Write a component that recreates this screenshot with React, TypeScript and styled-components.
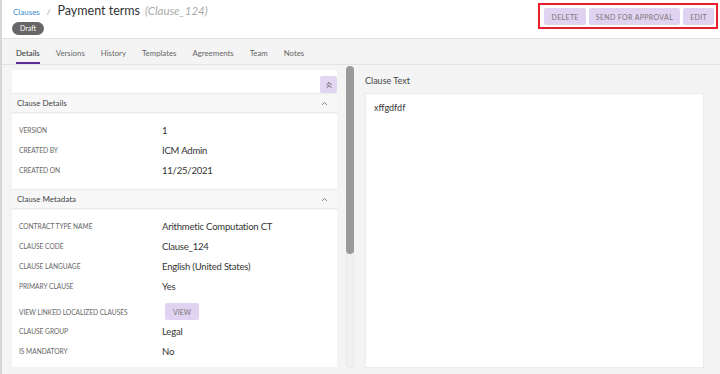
import React from 'react';
import styled, { createGlobalStyle } from 'styled-components';
import { ChevronUp, ChevronsUp } from 'lucide-react';

const GlobalStyle = createGlobalStyle`
  html, body {
    margin: 0;
    padding: 0;
    background: #f4f4f4;
  }
  * {
    box-sizing: border-box;
  }
`;

type Field = {
  label: string;
  value?: string;
  button?: string;
};

const detailFields: Field[] = [
  { label: 'Version', value: '1' },
  { label: 'Created by', value: 'ICM Admin' },
  { label: 'Created on', value: '11/25/2021' },
];

const metadataFields: Field[] = [
  { label: 'Contract type name', value: 'Arithmetic Computation CT' },
  { label: 'Clause code', value: 'Clause_124' },
  { label: 'Clause language', value: 'English (United States)' },
  { label: 'Primary clause', value: 'Yes' },
  { label: 'View linked localized clauses', button: 'View' },
  { label: 'Clause group', value: 'Legal' },
  { label: 'Is mandatory', value: 'No' },
  { label: 'Is editable', value: 'No' },
];

const tabs = ['Details', 'Versions', 'History', 'Templates', 'Agreements', 'Team', 'Notes'];

const App: React.FC = () => {
  function renderFields(fields: Field[]) {
    return fields.map((field) => (
      <Row key={field.label} $tall={!!field.button}>
        <Label>{field.label}</Label>
        {field.button ? <SmallButton>{field.button}</SmallButton> : <Value>{field.value}</Value>}
      </Row>
    ));
  }

  return (
    <Page>
      <GlobalStyle />

      {/* Header */}
      <Header>
        <TitleBlock>
          <Crumbs>
            <CrumbLink>Clauses</CrumbLink>
            <Slash>/</Slash>
            <Title>Payment terms</Title>
            <Code>(Clause_124)</Code>
          </Crumbs>
          <Badge>Draft</Badge>
        </TitleBlock>
        <Actions>
          <ActionButton>Delete</ActionButton>
          <ActionButton>Send for approval</ActionButton>
          <ActionButton>Edit</ActionButton>
        </Actions>
      </Header>

      {/* Tabs */}
      <Tabs>
        {tabs.map((tab, index) => (
          <Tab key={tab} $active={index === 0}>
            {tab}
          </Tab>
        ))}
      </Tabs>

      {/* Content */}
      <Content>
        <Card>
          <CardToolbar>
            <CollapseButton>
              <ChevronsUp size={10} strokeWidth={2.2} />
            </CollapseButton>
          </CardToolbar>

          <SectionHeader>
            Clause Details
            <ChevronUp size={9} strokeWidth={2.2} />
          </SectionHeader>
          <Fields>{renderFields(detailFields)}</Fields>

          <SectionHeader>
            Clause Metadata
            <ChevronUp size={9} strokeWidth={2.2} />
          </SectionHeader>
          <Fields>{renderFields(metadataFields)}</Fields>
        </Card>

        <Scrollbar>
          <Thumb />
        </Scrollbar>

        <TextPanel>
          <PanelTitle>Clause Text</PanelTitle>
          <TextBox>xffgdfdf</TextBox>
        </TextPanel>
      </Content>
    </Page>
  );
};

export default App;

const Page = styled.div`
  width: 720px;
  height: 374px;
  overflow: hidden;
  display: flex;
  flex-direction: column;
  background: #f4f4f4;
  border-left: 2px solid #d6d6d6;
  font-family: Lato, 'Noto Sans', sans-serif;
  color: #333;
`;

const Header = styled.div`
  height: 39px;
  flex-shrink: 0;
  background: #fff;
  border-bottom: 1px solid #e2e2e2;
  display: flex;
  justify-content: space-between;
  align-items: flex-start;
  padding: 0 2px 0 10px;
`;

const TitleBlock = styled.div`
  display: flex;
  flex-direction: column;
  align-items: flex-start;
  padding-top: 3px;
`;

const Crumbs = styled.div`
  display: flex;
  align-items: baseline;
  height: 16px;
`;

const CrumbLink = styled.span`
  font-size: 8px;
  color: #3a8bd0;
  margin-left: 1px;
`;

const Slash = styled.span`
  font-size: 8px;
  color: #999;
  margin: 0 7px 0 7px;
`;

const Title = styled.span`
  font-size: 12.5px;
  color: #333;
`;

const Code = styled.span`
  font-size: 11.5px;
  font-style: italic;
  color: #aaa;
  margin-left: 5px;
`;

const Badge = styled.span`
  margin-top: 3px;
  height: 13px;
  padding: 0 8px;
  border-radius: 7px;
  background: #666;
  color: #fff;
  font-size: 7px;
  line-height: 13px;
`;

const Actions = styled.div`
  margin-top: 3px;
  display: flex;
  gap: 3px;
  padding: 3px 2px 2px 4px;
  border: 2px solid #e3202c;
`;

const ActionButton = styled.button`
  height: 17px;
  padding: 0 7px;
  border: none;
  border-radius: 2px;
  background: #e0d3f1;
  color: #777;
  font-family: inherit;
  font-size: 7px;
  letter-spacing: 0.35px;
  text-transform: uppercase;
`;

const Tabs = styled.div`
  height: 26px;
  flex-shrink: 0;
  display: flex;
  padding-left: 14px;
  border-bottom: 1px solid #e3e3e3;
`;

const Tab = styled.div<{ $active?: boolean }>`
  margin-right: 16px;
  display: flex;
  align-items: center;
  font-size: 7.8px;
  color: ${({ $active }) => ($active ? '#333' : '#666')};
  padding-top: 4px;
  border-bottom: 2px solid ${({ $active }) => ($active ? '#5b2c93' : 'transparent')};
`;

const Content = styled.div`
  flex: 1;
  min-height: 0;
  display: flex;
  padding: 5px 16px 6px 10px;
`;

const Card = styled.div`
  width: 325px;
  height: 297px;
  overflow: hidden;
  background: #fff;
  flex-shrink: 0;
`;

const CardToolbar = styled.div`
  height: 23px;
  display: flex;
  justify-content: flex-end;
  align-items: flex-end;
`;

const CollapseButton = styled.div`
  width: 17px;
  height: 17px;
  border-radius: 2px;
  background: #e3d6f2;
  color: #444;
  display: flex;
  align-items: center;
  justify-content: center;
`;

const SectionHeader = styled.div`
  height: 20px;
  display: flex;
  align-items: center;
  justify-content: space-between;
  padding: 0 8px 0 5px;
  background: #f7f7f7;
  border-top: 1px solid #ececec;
  border-bottom: 1px solid #e8e8e8;
  box-shadow: 0 1px 1px rgba(0, 0, 0, 0.04);
  font-size: 8px;
  color: #444;

  svg {
    color: #666;
  }
`;

const Fields = styled.div`
  padding: 7px 0 9px 7px;

  & + & {
    padding-top: 6px;
  }
`;

const Row = styled.div<{ $tall?: boolean }>`
  height: ${({ $tall }) => ($tall ? '25px' : '20px')};
  padding-top: ${({ $tall }) => ($tall ? '6px' : '0')};
  display: flex;
  align-items: center;
`;

const Label = styled.div`
  width: 143px;
  flex-shrink: 0;
  font-size: 6.6px;
  color: #666;
  text-transform: uppercase;
`;

const Value = styled.div`
  font-size: 9.5px;
  letter-spacing: -0.2px;
  color: #333;
`;

const SmallButton = styled.button`
  margin-left: 3px;
  width: 34px;
  height: 17px;
  border: none;
  border-radius: 2px;
  background: #e0d3f1;
  color: #777;
  font-family: inherit;
  font-size: 7px;
  text-transform: uppercase;
`;

const Scrollbar = styled.div`
  width: 8px;
  height: 302px;
  margin: -4px 0 0 9px;
  border-radius: 4px;
  background: #f0f0f0;
  border: 1px solid #e8e8e8;
  flex-shrink: 0;
`;

const Thumb = styled.div`
  height: 188px;
  margin: -1px;
  border-radius: 4px;
  background: #9a9a9a;
`;

const TextPanel = styled.div`
  flex: 1;
  display: flex;
  flex-direction: column;
  margin-left: 11px;
`;

const PanelTitle = styled.div`
  height: 23px;
  padding-top: 5px;
  font-size: 9px;
  color: #444;
`;

const TextBox = styled.div`
  flex: 1;
  background: #fff;
  border: 1px solid #ececec;
  padding: 8px 8px;
  font-size: 9px;
  color: #333;
`;
